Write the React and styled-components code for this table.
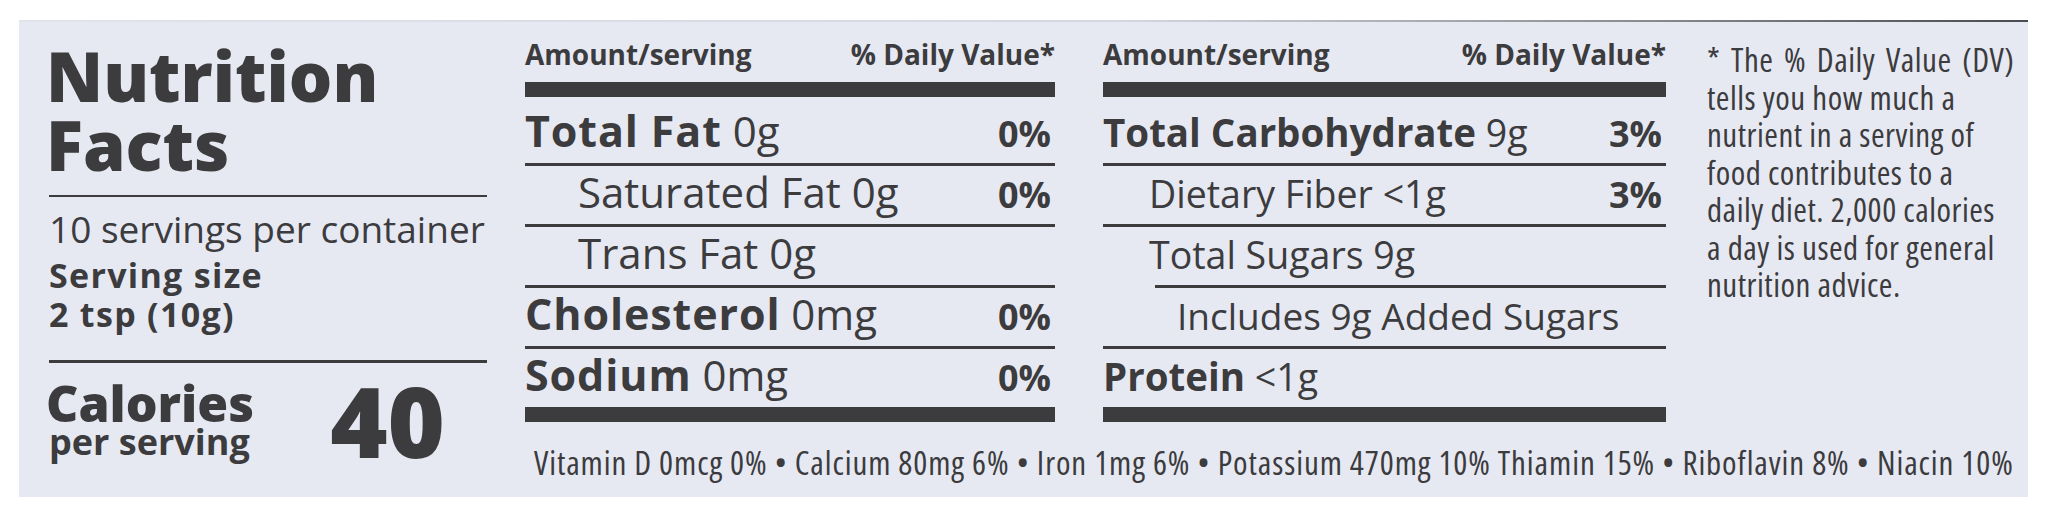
import React from "react";
import styled, { createGlobalStyle } from "styled-components";

const INK = "#3c3b3e";

const GlobalStyle = createGlobalStyle`
  html, body { margin: 0; padding: 0; background: #ffffff; }
  body { font-family: "Open Sans", "Noto Sans", sans-serif; color: ${INK}; }
`;

const Page = styled.div`
  box-sizing: border-box;
  width: 2048px;
  height: 516px;
  padding: 20px 20px 0 19px;
  background: #ffffff;
`;

const Panel = styled.section`
  box-sizing: border-box;
  display: flex;
  height: 477px;
  padding-left: 30px;
  background: #e6e9f2;
  border-top: 2px solid transparent;
  border-image: linear-gradient(to right, #e0e3ea 0%, #d4d7df 55%, #8c8e94 80%, #4a4b50 100%) 1;
  color: ${INK};
`;

/* ---------- left column ---------- */
const LeftCol = styled.div`
  flex: none;
  width: 438px;
  padding-top: 19px;
  display: flex;
  flex-direction: column;
`;

const Title = styled.h1`
  margin: 0 0 0 -3px;
  font-size: 68.5px;
  font-weight: 800;
`;

const TitleLine = styled.div`
  height: 69px;
  line-height: 69px;
  white-space: nowrap;
`;

const Divider = styled.div`
  height: ${(p) => p.$thick}px;
  margin-top: ${(p) => p.$mt}px;
  background: ${INK};
`;

const Servings = styled.div`
  margin-top: 14px;
  font-size: 37px;
  line-height: 36px;
  font-weight: 400;
  white-space: nowrap;
`;

const ServingSize = styled.div`
  margin-top: 9px;
  font-size: 34px;
  font-weight: 700;
  letter-spacing: 1.3px;
`;

const ServingLine = styled.div`
  height: 39px;
  line-height: 39px;
  white-space: nowrap;
`;

const CalRow = styled.div`
  margin-top: 19px;
  display: flex;
  align-items: flex-start;
`;

const CalText = styled.div`
  display: flex;
  flex-direction: column;
`;

const CalLabel = styled.div`
  margin-left: -3px;
  font-size: 50px;
  line-height: 43px;
  font-weight: 800;
`;

const CalSub = styled.div`
  font-size: 36px;
  line-height: 34px;
  font-weight: 700;
`;

const CalNum = styled.div`
  margin-left: auto;
  margin-right: 42px;
  font-size: 98px;
  line-height: 76px;
  font-weight: 800;
`;

/* ---------- tables ---------- */
const Main = styled.div`
  flex: 1;
  margin-left: 38px;
  display: flex;
  flex-direction: column;
`;

const TopArea = styled.div`
  display: flex;
`;

const Table = styled.div`
  flex: none;
  width: ${(p) => p.$w}px;
  & + & {
    margin-left: 48px;
  }
`;

const Header = styled.div`
  box-sizing: border-box;
  height: 60px;
  padding-top: 19px;
  display: flex;
  justify-content: space-between;
  font-size: 28px;
  line-height: 27px;
  font-weight: 700;
  white-space: nowrap;
`;

const Bar = styled.div`
  height: 15px;
  margin-bottom: ${(p) => p.$mb || 0}px;
  background: ${INK};
`;

const Row = styled.div`
  box-sizing: border-box;
  height: 58px;
  padding-top: 4px;
  padding-left: ${(p) => p.$indent || 0}px;
  display: flex;
  justify-content: space-between;
  align-items: baseline;
  line-height: ${(p) => p.$lh}px;
  white-space: nowrap;
`;

const Label = styled.span`
  font-size: ${(p) => p.$size}px;
  font-weight: 400;
`;

const Nutrient = styled.b`
  font-size: ${(p) => p.$size}px;
  font-weight: 700;
  letter-spacing: ${(p) => p.$track}px;
`;

const Pct = styled.span`
  padding-right: 4px;
  font-size: 36px;
  font-weight: 700;
`;

const Rule = styled.div`
  height: 3px;
  margin-left: ${(p) => p.$indent || 0}px;
  background: ${INK};
`;

const Footnote = styled.p`
  margin: 0 0 0 41px;
  padding-top: 19px;
  font-size: 33px;
  line-height: 37.5px;
  font-stretch: 75%;
  letter-spacing: 0.5px;
  white-space: nowrap;
`;

const FootLead = styled.span`
  word-spacing: 4px;
`;

const Vitamins = styled.div`
  margin-top: 25px;
  padding-left: 9px;
  font-size: 33px;
  line-height: 32px;
  font-stretch: 75%;
  letter-spacing: 0.9px;
  white-space: nowrap;
`;

const leftRows = [
  { name: "Total Fat", qty: "0g", pct: "0%" },
  { sub: "Saturated Fat 0g", pct: "0%", indent: 53 },
  { sub: "Trans Fat 0g", indent: 53 },
  { name: "Cholesterol", qty: "0mg", pct: "0%" },
  { name: "Sodium", qty: "0mg", pct: "0%" },
];

const rightRows = [
  { name: "Total Carbohydrate", qty: "9g", pct: "3%" },
  { sub: "Dietary Fiber <1g", pct: "3%", indent: 46 },
  { sub: "Total Sugars 9g", indent: 46, ruleIndent: 52 },
  { sub: "Includes 9g Added Sugars", indent: 74, size: 37 },
  { name: "Protein", qty: "<1g" },
];

const leftType = { name: 43, label: 42, lh: 43, track: 0.9 };
const rightType = { name: 38.5, label: 37.5, lh: 47, track: 0 };

function NutrientTable({ rows, width, type }) {
  return (
    <Table $w={width}>
      <Header>
        <span>Amount/serving</span>
        <span>% Daily Value*</span>
      </Header>
      <Bar $mb={8} />
      {rows.map((r, i) => (
        <React.Fragment key={i}>
          <Row $indent={r.indent} $lh={type.lh}>
            <Label $size={r.size || type.label}>
              {r.name ? (
                <>
                  <Nutrient $size={type.name} $track={type.track}>
                    {r.name}
                  </Nutrient>{" "}
                  {r.qty}
                </>
              ) : (
                r.sub
              )}
            </Label>
            {r.pct && <Pct>{r.pct}</Pct>}
          </Row>
          {i < rows.length - 1 && <Rule $indent={r.ruleIndent} />}
        </React.Fragment>
      ))}
      <Bar />
    </Table>
  );
}

export default function App() {
  return (
    <>
      <GlobalStyle />
      <Page>
        <Panel>
          <LeftCol>
            <Title>
              <TitleLine>Nutrition</TitleLine>
              <TitleLine>Facts</TitleLine>
            </Title>
            <Divider $thick={2} $mt={16} />
            <Servings>10 servings per container</Servings>
            <ServingSize>
              <ServingLine>Serving size</ServingLine>
              <ServingLine>2 tsp (10g)</ServingLine>
            </ServingSize>
            <Divider $thick={3} $mt={26} />
            <CalRow>
              <CalText>
                <CalLabel>Calories</CalLabel>
                <CalSub>per serving</CalSub>
              </CalText>
              <CalNum>40</CalNum>
            </CalRow>
          </LeftCol>
          <Main>
            <TopArea>
              <NutrientTable rows={leftRows} width={530} type={leftType} />
              <NutrientTable rows={rightRows} width={563} type={rightType} />
              <Footnote>
                <FootLead>* The % Daily Value (DV)</FootLead>
                <br />
                tells you how much a
                <br />
                nutrient in a serving of
                <br />
                food contributes to a
                <br />
                daily diet. 2,000 calories
                <br />
                a day is used for general
                <br />
                nutrition advice.
              </Footnote>
            </TopArea>
            <Vitamins>
              Vitamin D 0mcg 0% • Calcium 80mg 6% • Iron 1mg 6% • Potassium 470mg 10% Thiamin 15% • Riboflavin 8% • Niacin 10%
            </Vitamins>
          </Main>
        </Panel>
      </Page>
    </>
  );
}
